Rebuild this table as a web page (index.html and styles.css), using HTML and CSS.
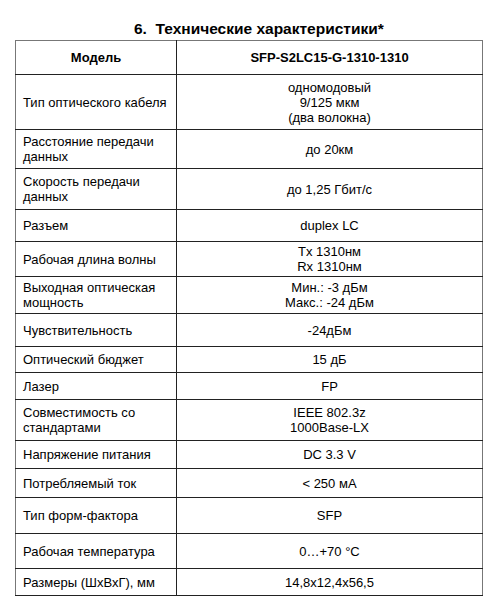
FILE: index.html
```html
<!DOCTYPE html>
<html lang="ru">
<head>
<meta charset="utf-8">
<title>Технические характеристики</title>
<link rel="stylesheet" href="styles.css">
</head>
<body>
<main class="page">
  <h1 class="title">6.&nbsp; Технические характеристики*</h1>
  <table class="spec">
    <colgroup><col class="col-name"><col class="col-value"></colgroup>
    <tr class="head h34"><th>Модель</th><th>SFP-S2LC15-G-1310-1310</th></tr>
    <tr class="h55"><td>Тип оптического кабеля</td><td>одномодовый<br>9/125 мкм<br>(два волокна)</td></tr>
    <tr class="h39"><td>Расстояние передачи<br>данных</td><td>до 20км</td></tr>
    <tr class="h41"><td>Скорость передачи<br>данных</td><td>до 1,25 Гбит/с</td></tr>
    <tr class="h32"><td>Разъем</td><td>duplex LC</td></tr>
    <tr class="h35"><td>Рабочая длина волны</td><td>Tx 1310нм<br>Rx 1310нм</td></tr>
    <tr class="h37"><td>Выходная оптическая<br>мощность</td><td>Мин.: -3 дБм<br>Макс.: -24 дБм</td></tr>
    <tr class="h33"><td>Чувствительность</td><td>-24дБм</td></tr>
    <tr class="h26"><td>Оптический бюджет</td><td>15 дБ</td></tr>
    <tr class="h27"><td>Лазер</td><td>FP</td></tr>
    <tr class="h41"><td>Совместимость со<br>стандартами</td><td>IEEE 802.3z<br>1000Base-LX</td></tr>
    <tr class="h28"><td>Напряжение питания</td><td>DC 3.3 V</td></tr>
    <tr class="h29"><td>Потребляемый ток</td><td>&lt; 250 мА</td></tr>
    <tr class="h36"><td>Тип форм-фактора</td><td>SFP</td></tr>
    <tr class="h35"><td>Рабочая температура</td><td>0…+70 °C</td></tr>
    <tr class="h27"><td>Размеры (ШхВхГ), мм</td><td>14,8x12,4x56,5</td></tr>
  </table>
  <p class="note">* Возможны изменения</p>
</main>
</body>
</html>
```
FILE: styles.css
```css
html, body {
  margin: 0;
  padding: 0;
  background: #fff;
}
body {
  font-family: "Liberation Sans", Arial, sans-serif;
  color: #000;
}
.page {
  padding: 21px 12px 0 15px;
}
.title {
  margin: 0 0 3px 119px;
  font-size: 15.5px;
  line-height: 16px;
  font-weight: bold;
  white-space: pre;
}
.spec {
  width: 468px;
  border-collapse: collapse;
  font-size: 13px;
  line-height: 15px;
}
.col-name { width: 161px; }
.spec th,
.spec td {
  border: 1px solid #222;
  padding: 0 7px;
  vertical-align: middle;
}
.spec td:first-child { text-align: left; }
.spec td:last-child { text-align: center; }
.spec th { font-weight: bold; text-align: center; }
.spec tr:first-child th { border-top-color: #777; }
.spec th:first-child, .spec td:first-child { border-left-color: #777; }
.spec th:last-child, .spec td:last-child { border-right-color: #777; }
.h26 { height: 26px; }
.h27 { height: 27px; }
.h28 { height: 28px; }
.h29 { height: 29px; }
.h32 { height: 32px; }
.h33 { height: 33px; }
.h34 { height: 34px; }
.h35 { height: 35px; }
.h36 { height: 36px; }
.h37 { height: 37px; }
.h39 { height: 39px; }
.h41 { height: 41px; }
.h55 { height: 55px; }
.note {
  margin: 2px 0 0 16px;
  font-size: 11px;
  line-height: 13px;
}
```
